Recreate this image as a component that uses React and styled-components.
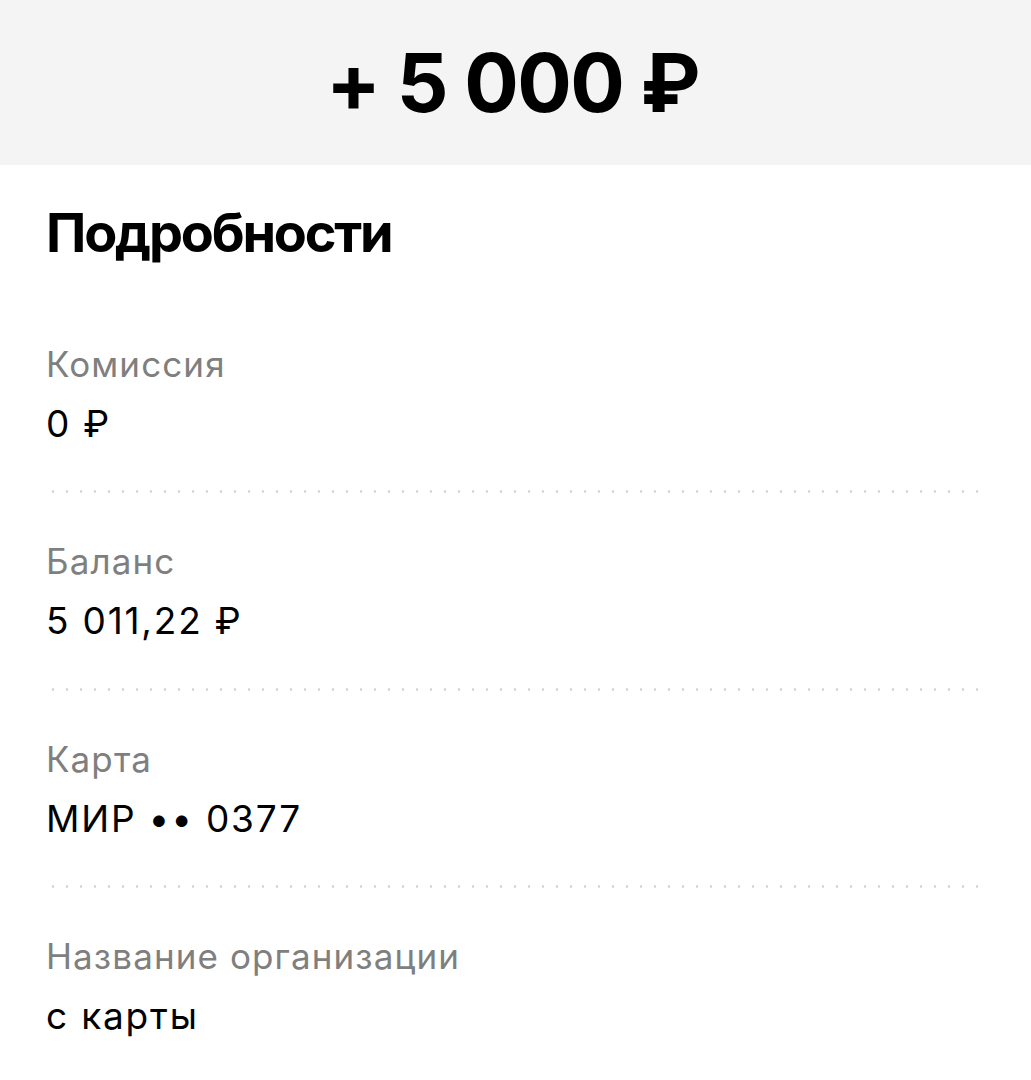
import React from 'react'
import styled, { createGlobalStyle } from 'styled-components'

const GlobalStyle = createGlobalStyle`
  body {
    margin: 0;
    background: #ffffff;
    font-family: Inter, "Liberation Sans", sans-serif;
    color: #000;
  }
`;

const Header = styled.div`
  height: 165px;
  background: #f4f4f4;
  display: flex;
  align-items: center;
  justify-content: center;
`;

const Amount = styled.div`
  font-size: 81px;
  font-weight: 700;
  line-height: 1;
  letter-spacing: -1.7px;
  margin-top: 2px;
  margin-right: 6px;
`;

const Content = styled.div`
  padding: 36px 46px 0 46px;
`;

const Title = styled.h2`
  margin: 0;
  font-size: 54px;
  font-weight: 700;
  line-height: 1.2;
  letter-spacing: -2.2px;
`;

const List = styled.div`
  margin-top: 77px;
  display: flex;
  flex-direction: column;
`;

const Row = styled.div`
  display: flex;
  flex-direction: column;
`;

const Label = styled.div`
  font-size: 35px;
  line-height: 1.2;
  letter-spacing: 1.1px;
  color: #7f7f7f;
`;

const Value = styled.div`
  margin-top: 17px;
  font-size: 37px;
  line-height: 1.2;
  letter-spacing: 1.8px;
  color: #000;
`;

const Divider = styled.div`
  height: 3px;
  margin: 44px 0 47px;
  background-image: radial-gradient(circle, #d6d6d6 1px, transparent 1.6px);
  background-size: 14px 3px;
  background-repeat: repeat-x;
`;

const details = [
  { label: 'Комиссия', value: '0 ₽' },
  { label: 'Баланс', value: '5 011,22 ₽' },
  { label: 'Карта', value: 'МИР •• 0377' },
  { label: 'Название организации', value: 'с карты' },
];

function App() {
  return (
    <>
      <GlobalStyle />
      <Header>
        <Amount>+ 5 000 ₽</Amount>
      </Header>
      <Content>
        <Title>Подробности</Title>
        <List>
          {details.map((d, i) => (
            <Row key={d.label}>
              <Label>{d.label}</Label>
              <Value>{d.value}</Value>
              {i < details.length - 1 && <Divider />}
            </Row>
          ))}
        </List>
      </Content>
    </>
  )
}

export default App
